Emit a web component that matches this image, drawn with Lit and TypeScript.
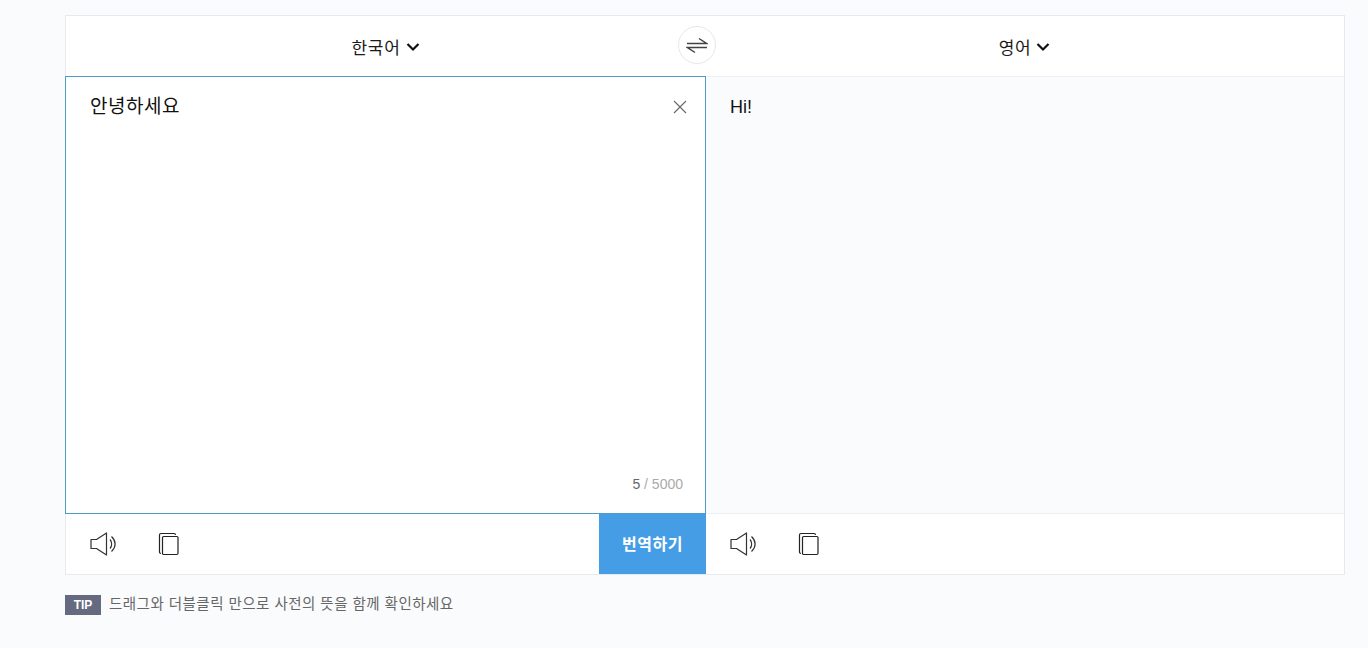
import { LitElement, html, css } from "lit";
import { customElement } from "lit/decorators.js";

const speaker = html`<svg class="speaker" width="28" height="24" viewBox="0 0 28 24" fill="none" stroke="#333" stroke-width="1.2">
  <path d="M1 7.5H6.5L16.5 1V23L6.5 16.5H1Z" stroke-linejoin="round"/>
  <path d="M20 7.5C22.2 10 22.2 14 20 16.5"/>
  <path d="M21.5 4.5C26.3 9 26.3 15 21.5 19.5"/>
</svg>`;

const copy = html`<svg width="22" height="24" viewBox="0 0 22 24" fill="none" stroke="#222" stroke-width="1.2">
  <path d="M3 21.5C2 21.5 1.5 21 1.5 20V3C1.5 2 2 1.5 3 1.5H16C17 1.5 17.5 2 17.5 3"/>
  <rect x="4.5" y="4.5" width="15.5" height="18" rx="1.2"/>
</svg>`;

@customElement("app-root")
export class AppRoot extends LitElement {
  static styles = css`
    :host {
      display: block;
      height: 648px;
      box-sizing: border-box;
      padding: 15px 24px 0 65px;
      background: #fafbfd;
      font-family: "Liberation Sans", "Noto Sans CJK KR", sans-serif;
      overflow: hidden;
    }
    .box {
      border: 1px solid #e7e9ee;
      background: #fff;
      width: 1280px;
      height: 560px;
      box-sizing: border-box;
      display: flex;
      flex-direction: column;
    }
    .head {
      height: 60px;
      display: grid;
      grid-template-columns: 639px 1fr;
      position: relative;
      border-bottom: 1px solid #eff0f3;
    }
    .lang {
      display: flex;
      align-items: center;
      justify-content: center;
      gap: 5px;
      font-size: 17px;
      letter-spacing: 0.7px;
      color: #1a1a1a;
      padding-top: 1px;
    }
    .swap {
      position: absolute;
      left: 612px;
      top: 10px;
      width: 38px;
      height: 38px;
      box-sizing: border-box;
      border-radius: 50%;
      border: 1px solid #e8e8e8;
      background: #fff;
      display: flex;
      align-items: center;
      justify-content: center;
    }
    .panes {
      display: grid;
      grid-template-columns: 641px 1fr;
      height: 438px;
      margin-left: -1px;
      margin-top: -1px;
    }
    .input {
      border: 1px solid #4f9bc6;
      background: #fff;
      position: relative;
      box-sizing: border-box;
      display: flex;
      flex-direction: column;
      justify-content: space-between;
      padding: 18px 22px 21px 24px;
    }
    .text {
      font-size: 19px;
      letter-spacing: 0.5px;
      line-height: 24px;
      color: #111;
    }
    .close {
      position: absolute;
      right: 18px;
      top: 23px;
      display: block;
    }
    .count {
      font-size: 14px;
      line-height: 16px;
      color: #aaa;
      text-align: right;
    }
    .count b {
      font-weight: 400;
      color: #666;
    }
    .output {
      background: #fafbfd;
      padding: 19px 24px;
      font-size: 18px;
      line-height: 24px;
      color: #111;
    }
    .foot {
      flex: 1;
      display: grid;
      grid-template-columns: 641px 1fr;
      margin-left: -1px;
    }
    .tools {
      display: flex;
      align-items: center;
      gap: 40px;
      padding-left: 25px;
    }
    .tools.right {
      border-top: 1px solid #eff0f3;
      margin-top: -1px;
      padding-left: 24px;
    }
    .go {
      margin-left: auto;
      align-self: stretch;
      width: 107px;
      border: 0;
      padding: 0 0 3px;
      background: #459de6;
      color: #fff;
      font: inherit;
      font-weight: 700;
      font-size: 16px;
      letter-spacing: 0.55px;
    }
    .tip {
      display: flex;
      align-items: center;
      gap: 8px;
      margin-top: 20px;
      font-size: 14.5px;
      letter-spacing: 0.47px;
      line-height: 16px;
      color: #666;
    }
    .tip-text {
      margin-top: -3px;
    }
    .tip span {
      background: #666a80;
      color: #fff;
      font-size: 12px;
      font-weight: 700;
      letter-spacing: 0;
      width: 36px;
      height: 20px;
      display: flex;
      align-items: center;
      justify-content: center;
    }
  `;

  render() {
    const chevron = html`<svg width="14" height="10" viewBox="0 0 14 10" fill="none" stroke="#111" stroke-width="2.2"><path d="M1.5 2L7 7.5L12.5 2"/></svg>`;
    return html`
      <div class="box">
        <div class="head">
          <div class="lang">한국어 ${chevron}</div>
          <div class="lang">영어 ${chevron}</div>
          <div class="swap">
            <svg width="22" height="18" viewBox="0 0 22 18" fill="none" stroke="#444" stroke-width="1.5">
              <path d="M1 7.5H20.5L13 2.5"/>
              <path d="M21 11.5H1.5L9 16.5"/>
            </svg>
          </div>
        </div>
        <div class="panes">
          <div class="input">
            <div class="text">안녕하세요</div>
            <svg class="close" width="14" height="14" viewBox="0 0 14 14" stroke="#666" stroke-width="1.1"><path d="M1 1L13 13M13 1L1 13"/></svg>
            <div class="count"><b>5</b> / 5000</div>
          </div>
          <div class="output">Hi!</div>
        </div>
        <div class="foot">
          <div class="tools">${speaker}${copy}<button class="go">번역하기</button></div>
          <div class="tools right">${speaker}${copy}</div>
        </div>
      </div>
      <div class="tip"><span>TIP</span><div class="tip-text">드래그와 더블클릭 만으로 사전의 뜻을 함께 확인하세요</div></div>
    `;
  }
}
